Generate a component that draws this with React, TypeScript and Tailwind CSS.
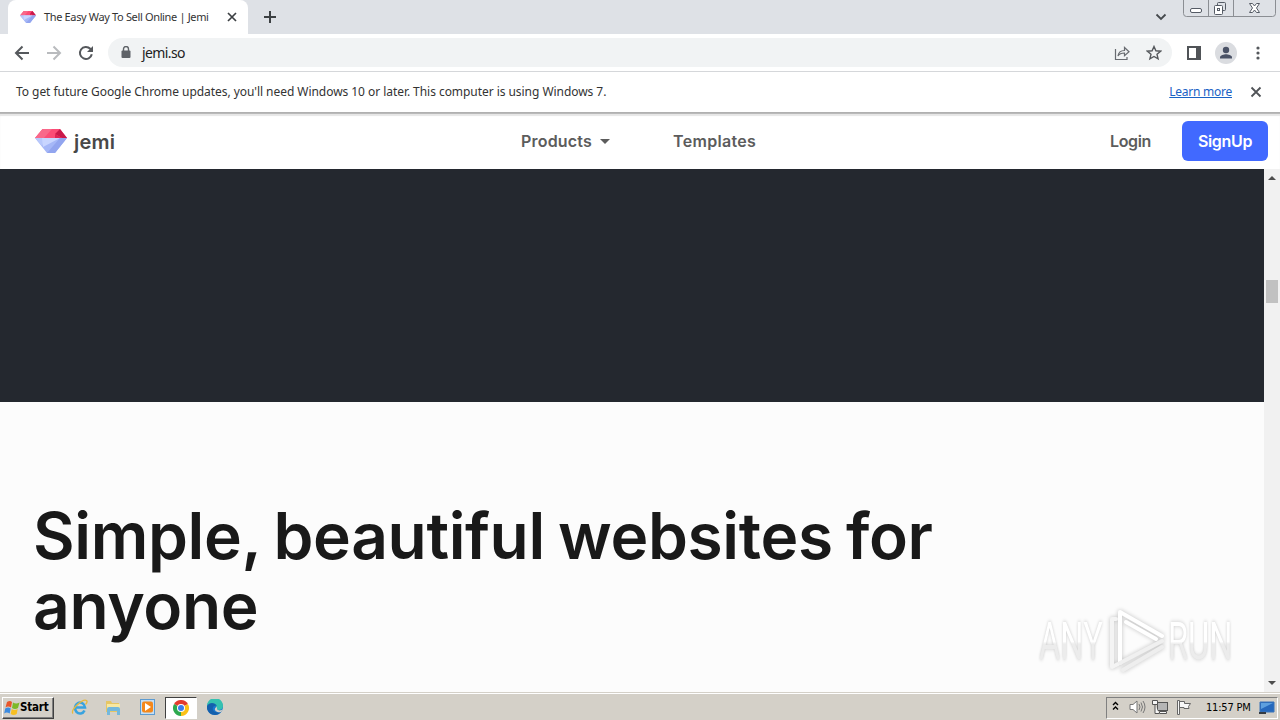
import React from "react";

const navLink = "font-['Inter'] text-[16px] leading-6 font-semibold text-[#5c5c5c] whitespace-nowrap";
const uiFont = "font-['Noto_Sans',sans-serif]";

function Gem({ className }: { className?: string }) {
  return (
    <svg className={className} viewBox="0 0 32 24">
      <path d="M7.500 0H25L32 9H0z" fill="#fb4c76" />
      <path d="M7.500 0H17L9 9H0z" fill="#f9688a" />
      <path d="M25 0L32 9H27L20 5z" fill="#c9194a" />
      <path d="M20 5L27 9H20z" fill="#e02456" />
      <path d="M0 9H32L20 24H12z" fill="#a5b7f7" />
      <path d="M0 9H11L7 17z" fill="#b8c8fb" />
      <path d="M7 9H25L8 18z" fill="#c8d5ff" />
      <path d="M32 9L20 24H12L25 9z" fill="#92a5ef" />
    </svg>
  );
}

function TabStrip() {
  return (
    <div className="relative flex h-[34px] shrink-0 bg-[#dee1e6]">
      <div className="ml-2 flex h-[34px] w-[240px] items-center rounded-t-lg bg-white pl-3 pr-[10px]">
        <Gem className="h-3 w-4" />
        <span className={`${uiFont} ml-[8px] flex-1 whitespace-nowrap text-[11px] tracking-[-0.350px] text-[#333]`}>
          The Easy Way To Sell Online | Jemi
        </span>
        <svg className="h-3 w-3" viewBox="0 0 12 12" stroke="#3c4043" strokeWidth="1.700">
          <path d="M2 2l8 8M10 2l-8 8" />
        </svg>
      </div>
      <svg className="ml-[15px] mt-[10px] h-[14px] w-[14px]" viewBox="0 0 14 14" stroke="#3c4043" strokeWidth="2">
        <path d="M7 1v12M1 7h12" />
      </svg>
      <div className="flex-1" />
      <svg className="mr-[16px] mt-[13px] h-2 w-[12px]" viewBox="0 0 12 8" fill="none" stroke="#45494d" strokeWidth="1.800">
        <path d="M1.500 1.500L6 6l4.500-4.500" />
      </svg>
      {/* Window buttons */}
      <svg className="mr-[3px] h-[18px] w-[94px]" viewBox="0 0 94 18" fill="none" stroke="#8b8e93">
        <path d="M.5 0v13.500q0 3 3 3h86q3 0 3-3V0M25.500 0v16M50.500 0v16" />
        <g stroke="#555b65">
          <rect x="7.500" y="8.500" width="11" height="4" rx="1.500" fill="#fff" />
          <rect x="34.500" y="2.500" width="8" height="8" rx="1" />
          <rect x="31.500" y="5.500" width="8" height="9" rx="1" fill="#fff" />
          <rect x="34.500" y="8.500" width="2" height="2" />
          <path d="M66.500 3.500h3l2 2.500 2-2.500h3l-3 4.500 3 4.500h-3l-2-2.500-2 2.500h-3l3-4.500z" fill="#fff" />
        </g>
      </svg>
    </div>
  );
}

function Toolbar() {
  return (
    <div className="flex h-[38px] shrink-0 items-center border-b border-[#d5d7da] bg-white">
      <svg className="ml-[14px] h-4 w-4" viewBox="0 0 16 16" fill="none" stroke="#55585c" strokeWidth="2">
        <path d="M15 8H2.500M8.500 1.500L2 8l6.500 6.500" />
      </svg>
      <svg className="ml-[16px] h-4 w-4" viewBox="0 0 16 16" fill="none" stroke="#b9bbbe" strokeWidth="2">
        <path d="M1 8h12.500M7.500 1.500L14 8l-6.500 6.500" />
      </svg>
      <svg className="ml-[16px] h-4 w-4" viewBox="0 0 16 16" fill="none" stroke="#55585c" strokeWidth="2">
        <path d="M13.800 9.200A6 6 0 1 1 12.300 3.800L14.500 6" />
        <path d="M15 1v6H9z" fill="#55585c" stroke="none" />
      </svg>
      <div className="ml-[14px] flex h-[29px] w-[1064px] items-center rounded-full bg-[#f1f3f4] pl-[13px] pr-[10px]">
        <svg className="mb-[2px] h-3 w-[10px]" viewBox="0 0 10 12">
          <rect x=".5" y="4.500" width="9" height="7.500" rx="1" fill="#5f6368" />
          <path d="M2.500 5V3a2.500 2.500 0 0 1 5 0v2" fill="none" stroke="#5f6368" strokeWidth="1.400" />
        </svg>
        <span className={`${uiFont} ml-[11px] flex-1 text-[14px] tracking-[-0.600px] text-[#222]`}>jemi.so</span>
        <svg className="h-4 w-4" viewBox="0 0 16 16" fill="none" stroke="#686b70" strokeWidth="1.200">
          <path d="M1.500 4v10.500H13V12" />
          <path d="M4 11c.5-4 3-5.500 6.500-5.500V2.500L15 6.700l-4.500 4V8C7.500 8 5.500 8.500 4 11z" />
        </svg>
        <svg className="ml-[16px] h-4 w-4" viewBox="0 0 16 16" fill="none" stroke="#55585c" strokeWidth="1.400">
          <path d="M8 1.500l1.900 4.300 4.700.4-3.600 3.100 1.100 4.600L8 11.500l-4.100 2.400L5 9.300 1.400 6.200l4.700-.4z" />
        </svg>
      </div>
      <svg className="ml-[15px] h-[14px] w-[14px]" viewBox="0 0 14 14">
        <path d="M0 0h14v14H0zM2 2v10h7V2z" fill="#505357" fillRule="evenodd" />
      </svg>
      <svg className="ml-[14px] h-[22px] w-[22px]" viewBox="0 0 22 22">
        <circle cx="11" cy="11" r="11" fill="#dadce0" />
        <circle cx="11" cy="8" r="3.200" fill="#4a5266" />
        <path d="M5 16.500v-1.200c0-2 4-3 6-3s6 1 6 3v1.200z" fill="#4a5266" />
      </svg>
      <svg className="ml-[19px] h-[14px] w-1" viewBox="0 0 4 14" fill="#55585c">
        <circle cx="2" cy="2" r="1.600" />
        <circle cx="2" cy="7" r="1.600" />
        <circle cx="2" cy="12" r="1.600" />
      </svg>
    </div>
  );
}

function InfoBar() {
  return (
    <div className={`${uiFont} flex h-[40px] shrink-0 items-center bg-white pl-4 pr-[18px] text-[12px] text-[#333]`}>
      <span className="flex-1 whitespace-nowrap tracking-[-0.050px]">
        To get future Google Chrome updates, you'll need Windows 10 or later. This computer is using Windows 7.
      </span>
      <a className="mr-[18px] tracking-[-0.250px] text-[#1a62c5] underline">Learn more</a>
      <svg className="h-3 w-3" viewBox="0 0 12 12" stroke="#505357" strokeWidth="1.800">
        <path d="M1.500 1.500l9 9M10.500 1.500l-9 9" />
      </svg>
    </div>
  );
}

function SiteHeader() {
  return (
    <header className="flex h-[57px] shrink-0 items-center border-t border-[#b0b0b0] bg-white shadow-[inset_0_1px_0_#b9b9b9,inset_0_3px_1px_#e6e6e6]">
      <div className="flex w-[521px] items-center pl-[35px]">
        <Gem className="h-6 w-8" />
        <span className="ml-[7px] pt-px font-['Inter'] text-[20px] font-semibold leading-6 tracking-[0.200px] text-[#484848]">jemi</span>
      </div>
      <div className="flex w-[152px] items-center">
        <span className={`${navLink} tracking-[0.200px]`}>Products</span>
        <svg className="ml-[8px] h-[5px] w-[10px]" viewBox="0 0 10 5" fill="#5c5c5c">
          <path d="M0 0h10L5 5z" />
        </svg>
      </div>
      <span className={`${navLink} flex-1 tracking-[0.320px]`}>Templates</span>
      <span className={`${navLink} mr-[31px] tracking-[-0.350px]`}>Login</span>
      <button className="mr-3 h-10 w-[86px] rounded-md bg-[#4169ff] font-['Inter'] text-[16px] font-semibold tracking-[-0.350px] text-white">
        SignUp
      </button>
    </header>
  );
}

function ScrollBar() {
  return (
    <div className="flex w-4 flex-col items-center bg-[#f1f1f1]">
      <svg className="mt-[6px] h-[5px] w-2" viewBox="0 0 8 5" fill="#4d4d4d">
        <path d="M0 5h8L4 1z" />
      </svg>
      <div className="mt-[100px] h-[23px] w-3 bg-[#c1c1c1]" />
      <div className="flex-1" />
      <svg className="mb-[6px] h-[5px] w-2" viewBox="0 0 8 5" fill="#4d4d4d">
        <path d="M0 0h8L4 4z" />
      </svg>
    </div>
  );
}

function Watermark() {
  const word =
    "font-['Roboto'] text-[51px] leading-none inline-block origin-left scale-x-[0.640] bg-gradient-to-b from-white from-50% to-[#ececec] to-55% bg-clip-text text-transparent drop-shadow-[0_0_2px_#c8c8c8]";
  return (
    <div className="absolute left-[1039px] top-[606px] flex h-[70px] w-[200px] items-center">
      <div className="w-[65px] pt-[1px]">
        <span className={word}>ANY</span>
      </div>
      <svg className="h-[70px] w-[64px] shrink-0 drop-shadow-[0_0_2px_#c0c0c0]" viewBox="0 0 64 70" fill="none" stroke="#fff" strokeWidth="4" strokeLinecap="round" strokeLinejoin="round">
        <path d="M12 13H8v48l6-3" stroke="#f4f4f4" />
        <path d="M16 57V6l42 24" />
        <path d="M16 57l42-22" stroke="#f0f0f0" />
        <path d="M19 64l39-23" stroke="#eee" />
        <path d="M22 16l30 17" />
      </svg>
      <div className="w-[70px] pt-[1px]">
        <span className={word}>RUN</span>
      </div>
    </div>
  );
}

function TaskBar() {
  return (
    <div className="flex h-[28px] shrink-0 items-center border-t border-[#d4d0c8] bg-[#d4d0c8] shadow-[inset_0_1px_0_#fff]">
      <div className="ml-[2px] mt-[2px] flex h-[22px] w-[52px] items-center border border-b-[#404040] border-l-white border-r-[#404040] border-t-white pl-[1px] shadow-[inset_-1px_-1px_0_#808080]">
        <svg className="h-4 w-4 shrink-0" viewBox="0 0 16 16">
          <path d="M3 2q3-2 5 0L7 7.500Q4 5.500 1.500 7.500z" fill="#e8562a" />
          <path d="M9 2.500q3 2 6.500 0l-1.500 5.500q-3 2-6 0z" fill="#7db928" />
          <path d="M1.200 8.500q3-2 5.500 0l-1 5q-3-2-5.500 0z" fill="#3c8be0" />
          <path d="M7.700 9q3 2 6 0l-1 5q-3 2-6 0z" fill="#f7bf22" />
        </svg>
        <span className="pt-px font-['DejaVu_Sans_Condensed','DejaVu_Sans'] text-[11.500px] font-bold tracking-[-0.200px] text-black">Start</span>
      </div>
      {/* Internet Explorer */}
      <svg className="ml-[17px] h-[18px] w-[18px]" viewBox="0 0 18 18" fill="none">
        <path d="M13.500 12.500A5 5.500 0 1 1 14 9.500H4" stroke="#38a3df" strokeWidth="2.600" />
        <path d="M2 15.500C-1 12 12 0 15.500 2.500c1 1 0 3-1 4" stroke="#e7b93c" strokeWidth="1.300" />
      </svg>
      {/* Explorer */}
      <svg className="ml-[15px] h-[18px] w-[18px]" viewBox="0 0 18 18">
        <path d="M2 3h5l1 2h7v9H2z" fill="#e6c665" />
        <path d="M3 6h13v6H3z" fill="#f8e8a1" />
        <path d="M3 11q0-2 2-2h9q2 0 2 2v6h-3v-4H6v4H3z" fill="#74b8dc" />
      </svg>
      {/* Media Player */}
      <svg className="ml-[17px] h-[18px] w-[18px]" viewBox="0 0 18 18">
        <rect x="1.500" y="1.500" width="14" height="15" fill="#c5def4" stroke="#5c9bd1" />
        <rect x="3" y="3.500" width="11" height="11" rx="2" fill="#f4881c" />
        <path d="M6 5v8l6-4z" fill="#fff" />
      </svg>
      <div className="ml-[8px] mt-[2px] flex h-[22px] w-[32px] items-center justify-center border border-b-white border-l-[#404040] border-r-white border-t-[#404040] bg-white">
        <svg className="h-4 w-4" viewBox="0 0 16 16">
          <path d="M8 8L1.070 4A8 8 0 0 1 14.930 4z" fill="#e33b2e" />
          <path d="M8 8L14.930 4A8 8 0 0 1 8 16z" fill="#fbc116" />
          <path d="M8 8v8A8 8 0 0 1 1.070 4z" fill="#2da94f" />
          <circle cx="8" cy="8" r="4" fill="#fff" />
          <circle cx="8" cy="8" r="3" fill="#3b7ded" />
        </svg>
      </div>
      {/* Edge */}
      <svg className="ml-[10px] h-4 w-4" viewBox="0 0 16 16">
        <circle cx="8" cy="8" r="8" fill="#1978cf" />
        <path d="M0 7A8 8 0 0 1 16 7c0 4-4 4.500-6.500 3.500C11 7 7 4 0 7z" fill="#35c1b0" />
        <path d="M0 7c2-4 8-4 10 0-3-1-5 1-4 4 1 2 4 3 8 2-5 6-15 2-14-6z" fill="#1460ad" />
        <path d="M9.500 7.500c1 2 0 3 1.500 3.600 2 .7 4 0 5-1L14 13c-3 1-7-1-6-3.500z" fill="#d4d0c8" />
      </svg>
      <div className="flex-1" />
      <div className="mr-[2px] mt-[2px] flex h-[22px] w-[172px] items-center border border-b-white border-l-[#808080] border-r-white border-t-[#808080] pl-[5px]">
        <svg className="mb-[3px] h-[10px] w-[7px]" viewBox="0 0 7 10" fill="none" stroke="#000" strokeWidth="1.400">
          <path d="M1 4l2.500-2.500L6 4M1 8.500L3.500 6 6 8.500" />
        </svg>
        <svg className="mb-[2px] ml-[10px] h-4 w-[17px]" viewBox="0 0 17 16" fill="none" stroke="#777">
          <path d="M1 5.500h3L8 2v12l-4-3.500H1z" fill="#fff" />
          <path d="M10 5q2 3 0 6M12 3.500q3 4.500 0 9M14 2q4 6 0 12" />
        </svg>
        <svg className="mb-[2px] ml-[6px] h-4 w-[17px]" viewBox="0 0 17 16" fill="#f7f7f7" stroke="#555">
          <rect x="5.500" y="3.500" width="10" height="8" fill="#b5b5b5" />
          <path d="M.5 1.500h5v4h-5zM3 5.500v9h4M7.500 12.500h7v2h-7z" />
        </svg>
        <svg className="mb-[2px] ml-[7px] h-4 w-4" viewBox="0 0 16 16" fill="#f7f7f7" stroke="#666">
          <path d="M1.500 1.500h2v14h-2zM3.500 2.500h5v2h6l-2 3 .5 2h-5v-1h-4.500z" />
        </svg>
        <span className="ml-[14px] w-[48px] whitespace-nowrap pt-px font-['DejaVu_Sans_Condensed','DejaVu_Sans'] text-[11px] tracking-[-0.200px] text-black">11:57 PM</span>
        <svg className="ml-[5px] h-[14px] w-4" viewBox="0 0 16 14">
          <path d="M1 1h14v10H1z" fill="#2669bd" stroke="#3a75b8" />
          <path d="M2 2h12L2 8z" fill="#5da0df" />
          <path d="M0 11h7v2H0z" fill="#353b42" />
        </svg>
      </div>
    </div>
  );
}

export default function App() {
  return (
    <div className="relative flex h-[720px] w-[1280px] flex-col overflow-hidden bg-white">
      <TabStrip />
      <Toolbar />
      <InfoBar />
      <SiteHeader />
      <div className="flex min-h-0 flex-1">
        <main className="flex-1 bg-[#fcfcfc]">
          <div className="h-[233px] bg-[#24282f]" />
          <h1 className="pl-[33px] pt-[99px] font-['Inter'] text-[64px] font-semibold leading-[70px] tracking-[-0.350px] text-[#191919] [word-spacing:-2.500px]">
            <span className="block whitespace-nowrap">Simple, beautiful websites for</span>
            <span className="block">anyone</span>
          </h1>
        </main>
        <ScrollBar />
      </div>
      <TaskBar />
      <Watermark />
    </div>
  );
}
